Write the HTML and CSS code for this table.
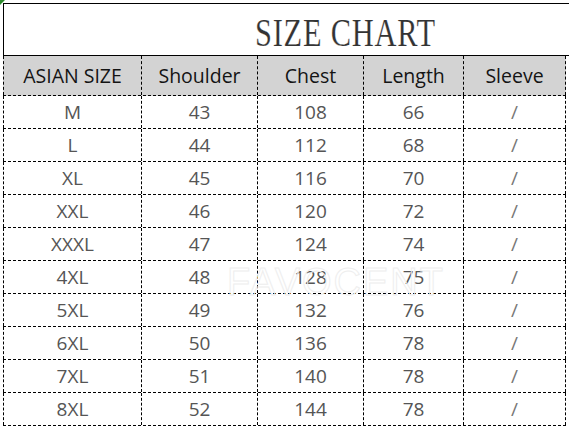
FILE: index.html
```html
<!DOCTYPE html>
<html>
<head>
<meta charset="utf-8">
<link rel="stylesheet" href="styles.css">
</head>
<body>
<div class="sheet">
  <span class="corner"></span>
  <div class="title"><span class="title-text">SIZE CHART</span></div>
  <div class="table">
    <div class="row head">
      <div class="cell">ASIAN SIZE</div><div class="cell">Shoulder</div><div class="cell">Chest</div><div class="cell">Length</div><div class="cell">Sleeve</div>
    </div>
    <div class="row"><div class="cell">M</div><div class="cell">43</div><div class="cell">108</div><div class="cell">66</div><div class="cell slash">/</div></div>
    <div class="row"><div class="cell">L</div><div class="cell">44</div><div class="cell">112</div><div class="cell">68</div><div class="cell slash">/</div></div>
    <div class="row"><div class="cell">XL</div><div class="cell">45</div><div class="cell">116</div><div class="cell">70</div><div class="cell slash">/</div></div>
    <div class="row"><div class="cell">XXL</div><div class="cell">46</div><div class="cell">120</div><div class="cell">72</div><div class="cell slash">/</div></div>
    <div class="row"><div class="cell">XXXL</div><div class="cell">47</div><div class="cell">124</div><div class="cell">74</div><div class="cell slash">/</div></div>
    <div class="row"><div class="cell">4XL</div><div class="cell">48</div><div class="cell">128</div><div class="cell">75</div><div class="cell slash">/</div></div>
    <div class="row"><div class="cell">5XL</div><div class="cell">49</div><div class="cell">132</div><div class="cell">76</div><div class="cell slash">/</div></div>
    <div class="row"><div class="cell">6XL</div><div class="cell">50</div><div class="cell">136</div><div class="cell">78</div><div class="cell slash">/</div></div>
    <div class="row"><div class="cell">7XL</div><div class="cell">51</div><div class="cell">140</div><div class="cell">78</div><div class="cell slash">/</div></div>
    <div class="row"><div class="cell">8XL</div><div class="cell">52</div><div class="cell">144</div><div class="cell">78</div><div class="cell slash">/</div></div>
    <span class="watermark">FAVOCENT</span>
  </div>
</div>
</body>
</html>
```

FILE: styles.css
```css
html, body {
  margin: 0;
  padding: 0;
  background: #ffffff;
}
body {
  width: 569px;
  height: 429px;
  overflow: hidden;
}
.sheet {
  position: relative;
  padding: 3px 0 0 3px;
}
.corner {
  position: absolute;
  left: 0;
  top: 0;
  width: 0;
  height: 0;
  border-top: 5px solid #2e8b2e;
  border-right: 5px solid transparent;
}
.title {
  border-top: 1px solid #000;
  border-left: 1px solid #000;
  border-bottom: 1px solid #000;
  display: flex;
  align-items: center;
  padding-left: 251px;
  padding-top: 5px;
  box-sizing: border-box;
  height: 53px;
}
.title-text {
  display: inline-block;
  font-family: "Liberation Serif", serif;
  font-size: 39px;
  color: #333;
  transform: scaleX(0.78);
  transform-origin: left center;
  letter-spacing: 1px;
  -webkit-text-stroke: 0.2px #fff;
}
.table {
  position: relative;
  width: 563px;
}
.row {
  display: grid;
  grid-template-columns: 138px 116px 106px 100px 103px;
  height: 33px;
  border-bottom: 1px dashed #000;
  box-sizing: border-box;
  font-family: "Open Sans", "Noto Sans", sans-serif;
  font-size: 19px;
  color: #555;
}
.row.head {
  height: 40px;
  background: #d3d3d3;
  color: #141414;
  font-size: 19.5px;
}
.cell {
  border-left: 1px dashed #000;
  display: flex;
  align-items: center;
  justify-content: center;
  box-sizing: border-box;
}
.cell:last-child {
  border-right: 1px dashed #000;
}
.slash {
  color: #777;
}
.watermark {
  position: absolute;
  left: 224px;
  top: 205px;
  font-family: "Liberation Sans", sans-serif;
  font-size: 38px;
  letter-spacing: 2px;
  color: transparent;
  -webkit-text-stroke: 1px #eeeeee;
  pointer-events: none;
}
```
